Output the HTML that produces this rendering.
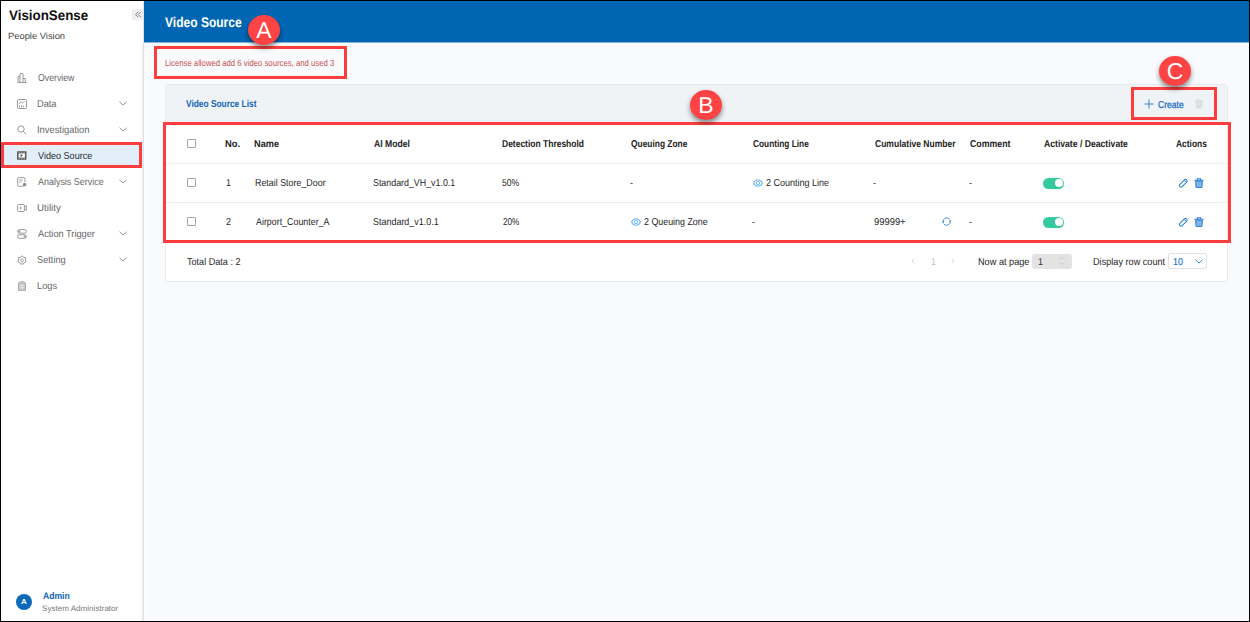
<!DOCTYPE html>
<html><head><meta charset="utf-8">
<style>
*{box-sizing:border-box;margin:0;padding:0}
html,body{width:1250px;height:622px;overflow:hidden;background:#f9fafd}
body{font-family:"Liberation Sans",sans-serif;position:relative}
.a{position:absolute}
.tx{position:absolute;white-space:nowrap;transform-origin:0 0;z-index:5;text-rendering:geometricPrecision}
#border{position:absolute;left:0;top:0;width:1250px;height:622px;border:1px solid #000;z-index:100}
#side{position:absolute;left:0;top:0;width:144px;height:622px;background:#fff;border-right:1px solid #e2e2e2}
#hdr{position:absolute;left:144px;top:0;width:1106px;height:43px;background:#0066b3;border-bottom:1px solid #80b3d9}
.ic{position:absolute;left:17px;z-index:5}
.ch{position:absolute;left:119px;z-index:5}
.rb{position:absolute;border:3px solid #fb3d3d;z-index:40}
.circ{position:absolute;width:32px;height:30px;border-radius:50%;background:#fd4343;color:#fff;font-size:23px;text-align:center;line-height:31px;text-rendering:geometricPrecision;box-shadow:0 3px 5px rgba(0,0,0,.45);z-index:50}
#card{position:absolute;left:165px;top:84px;width:1063px;height:198px;background:#fff;border:1px solid #e8e9eb;border-radius:3px}
#cardhdr{position:absolute;left:166px;top:85px;width:1061px;height:37px;background:#eff3f6;border-radius:2px 2px 0 0}
.cb{position:absolute;left:187px;width:9px;height:9px;border:1px solid #a4a4a4;border-radius:1px;background:#fff}
.hl{position:absolute;left:166px;width:1061px;height:1px;background:#ececec}
.tog{position:absolute;left:1043px;width:21px;height:11px;border-radius:6px;background:#34c99f}
.tog:after{content:"";position:absolute;right:1.5px;top:1.3px;width:8px;height:8px;border-radius:50%;background:#fff}
</style></head><body>
<div id="side"></div>
<div class="a" style="left:140px;top:43px;width:3px;height:579px;background:linear-gradient(to right,#ffffff,#f0f0f0)"></div>
<div class="a" style="left:144px;top:43px;width:3px;height:579px;background:linear-gradient(to right,#fdfdfe,#f9fafd)"></div>
<div id="hdr"></div>
<div id="card"></div>
<div id="cardhdr"></div>

<div class="a" style="left:132px;top:9px;width:11px;height:11px;background:#efefef"></div>
<svg class="a" style="left:132px;top:9px" width="11" height="11" viewBox="0 0 11 11"><path d="M6.2 2.8 L3.6 5.5 L6.2 8.2 M8.9 2.8 L6.3 5.5 L8.9 8.2" fill="none" stroke="#7a7a7a" stroke-width="0.95"/></svg>

<!-- Overview -->
<svg class="ic" style="top:73px" width="10" height="10" viewBox="0 0 10 10"><path d="M0.5 9.5 H9.5 M1 9.3 V3.7 H3 M3 9.3 V1 Q3 0.5 3.5 0.5 H5.6 Q6 0.5 6 1 V9.3 M6 5.5 H8.3 V9.3" fill="none" stroke="#8e8e8e" stroke-width="0.9"/></svg>
<!-- Data -->
<svg class="ic" style="top:99px" width="10" height="10" viewBox="0 0 10 10"><rect x="0.5" y="0.5" width="9" height="9" rx="1" fill="none" stroke="#8e8e8e" stroke-width="0.9"/><path d="M2 5 L4 3 L5.5 4 L7.8 2 M2.5 8.5 V6.5 M4.5 8.5 V6 M6.5 8.5 V6.5" fill="none" stroke="#8e8e8e" stroke-width="0.8"/></svg>
<svg class="ch" style="top:101px" width="8" height="5" viewBox="0 0 8 5"><path d="M0.5 0.8 L4 4 L7.5 0.8" fill="none" stroke="#8a8a8a" stroke-width="0.9"/></svg>
<!-- Investigation -->
<svg class="ic" style="top:125px" width="10" height="10" viewBox="0 0 10 10"><circle cx="4" cy="4" r="3.2" fill="none" stroke="#8e8e8e" stroke-width="0.9"/><path d="M6.3 6.3 L9.3 9.3" stroke="#8e8e8e" stroke-width="0.9"/></svg>
<svg class="ch" style="top:127px" width="8" height="5" viewBox="0 0 8 5"><path d="M0.5 0.8 L4 4 L7.5 0.8" fill="none" stroke="#8a8a8a" stroke-width="0.9"/></svg>
<!-- Video Source active -->
<div class="a" style="left:1px;top:142px;width:142px;height:26px;background:#e2eefa"></div>
<svg class="ic" style="top:151px" width="10" height="10" viewBox="0 0 10 10"><rect x="0" y="0" width="9.5" height="9" rx="1.3" fill="#5e5e5e"/><rect x="1.6" y="2.4" width="6.3" height="4.2" fill="#fff"/><path d="M3.6 3 L6 4.5 L3.6 6 Z" fill="#4a4a4a"/><path d="M1.5 1 H3 M4 1 H5.5 M6.5 1 H8 M1.5 8 H3 M4 8 H5.5 M6.5 8 H8" stroke="#fff" stroke-width="0.6"/></svg>
<!-- Analysis Service -->
<svg class="ic" style="top:177px" width="10" height="10" viewBox="0 0 10 10"><path d="M6.5 9.3 H1.3 Q0.7 9.3 0.7 8.7 V1.3 Q0.7 0.7 1.3 0.7 H7.3 Q7.9 0.7 7.9 1.3 V5" fill="none" stroke="#8e8e8e" stroke-width="0.9"/><path d="M2.3 3 H5.5 M2.3 5 H4.5" stroke="#8e8e8e" stroke-width="0.8"/><circle cx="7.6" cy="7.6" r="1.8" fill="#8e8e8e"/></svg>
<svg class="ch" style="top:179px" width="8" height="5" viewBox="0 0 8 5"><path d="M0.5 0.8 L4 4 L7.5 0.8" fill="none" stroke="#8a8a8a" stroke-width="0.9"/></svg>
<!-- Utility -->
<svg class="ic" style="top:203px" width="10" height="10" viewBox="0 0 10 10"><rect x="0.6" y="1.5" width="6.8" height="7" rx="0.8" fill="none" stroke="#8e8e8e" stroke-width="0.9"/><path d="M7.4 4 L9.4 2.8 V7.2 L7.4 6" fill="none" stroke="#8e8e8e" stroke-width="0.9"/><path d="M3 3.5 L5 5 L3 6.5 Z" fill="#8e8e8e"/></svg>
<!-- Action Trigger -->
<svg class="ic" style="top:229px" width="10" height="10" viewBox="0 0 10 10"><rect x="0.6" y="0.6" width="8.8" height="3.6" rx="1.8" fill="none" stroke="#8e8e8e" stroke-width="0.9"/><rect x="0.6" y="5.8" width="8.8" height="3.6" rx="1.8" fill="none" stroke="#8e8e8e" stroke-width="0.9"/><circle cx="2.4" cy="2.4" r="1" fill="#8e8e8e"/><circle cx="7.6" cy="7.6" r="1" fill="#8e8e8e"/></svg>
<svg class="ch" style="top:231px" width="8" height="5" viewBox="0 0 8 5"><path d="M0.5 0.8 L4 4 L7.5 0.8" fill="none" stroke="#8a8a8a" stroke-width="0.9"/></svg>
<!-- Setting -->
<svg class="ic" style="top:255px" width="10" height="10" viewBox="0 0 10 10"><path d="M5 0.7 L6.4 2.2 L8.6 2.6 L8.3 4.8 L9.2 6.6 L7.2 7.5 L6.2 9.3 L5 8.6 L3.8 9.3 L2.8 7.5 L0.8 6.6 L1.7 4.8 L1.4 2.6 L3.6 2.2 Z" fill="none" stroke="#8e8e8e" stroke-width="0.9" stroke-linejoin="round"/><circle cx="5" cy="5.3" r="1.4" fill="none" stroke="#8e8e8e" stroke-width="0.8"/></svg>
<svg class="ch" style="top:257px" width="8" height="5" viewBox="0 0 8 5"><path d="M0.5 0.8 L4 4 L7.5 0.8" fill="none" stroke="#8a8a8a" stroke-width="0.9"/></svg>
<!-- Logs -->
<svg class="ic" style="top:281px" width="10" height="10" viewBox="0 0 10 10"><path d="M1.5 2.2 Q1.5 1.6 2.1 1.6 H3.3 Q3.6 0.4 5 0.4 Q6.4 0.4 6.7 1.6 H7.9 Q8.5 1.6 8.5 2.2 V9 Q8.5 9.6 7.9 9.6 H2.1 Q1.5 9.6 1.5 9 Z" fill="#c9c9c9" stroke="#9c9c9c" stroke-width="0.8"/><path d="M3 4.6 H7 M3 6.8 H7" stroke="#f4f4f4" stroke-width="0.8"/></svg>

<div class="a" style="left:16px;top:594px;width:16px;height:16px;border-radius:50%;background:#0d6ab8;color:#fff;font-size:8px;font-weight:bold;text-align:center;line-height:16px">A</div>

<svg class="a" style="left:1144px;top:99px" width="10" height="10" viewBox="0 0 10 10"><path d="M5 0.5 V9.5 M0.5 5 H9.5" stroke="#3a86cc" stroke-width="1"/></svg>
<svg class="a" style="left:1194px;top:99px" width="10" height="10" viewBox="0 0 10 10"><path d="M0.5 2 H9.5 M3.5 2 V0.8 H6.5 V2" fill="none" stroke="#d8d8d8" stroke-width="1"/><path d="M1.5 2.5 H8.5 L8 9.5 H2 Z" fill="#dedede"/></svg>

<div class="hl" style="top:163px"></div>
<div class="hl" style="top:202px"></div>
<div class="cb" style="top:139px"></div>
<div class="cb" style="top:178px"></div>
<div class="cb" style="top:217px"></div>

<svg class="a" style="left:753px;top:179px" width="10" height="8" viewBox="0 0 10 8"><path d="M0.6 4 C2.3 -0.3 7.7 -0.3 9.4 4 C7.7 8.3 2.3 8.3 0.6 4 Z" fill="none" stroke="#70bcf6" stroke-width="1.1"/><circle cx="5" cy="4" r="1.7" fill="none" stroke="#70bcf6" stroke-width="1"/></svg>
<div class="tog" style="top:177.6px"></div>
<svg class="a" style="left:631px;top:218px" width="10" height="8" viewBox="0 0 10 8"><path d="M0.6 4 C2.3 -0.3 7.7 -0.3 9.4 4 C7.7 8.3 2.3 8.3 0.6 4 Z" fill="none" stroke="#70bcf6" stroke-width="1.1"/><circle cx="5" cy="4" r="1.7" fill="none" stroke="#70bcf6" stroke-width="1"/></svg>
<svg class="a" style="left:942px;top:217px" width="10" height="10" viewBox="0 0 10 10"><path d="M1.2 5.6 A3.7 3.7 0 0 1 7.6 2.2 M8.2 3.6 A3.7 3.7 0 0 1 1.8 7" fill="none" stroke="#3a8ad6" stroke-width="0.95"/><path d="M0.2 4.6 L2.4 4.6 L1.2 6.4 Z M9.2 4.6 L7 4.6 L8.2 2.8 Z" fill="#3a8ad6"/></svg>
<div class="tog" style="top:216.6px"></div>

<svg class="a" style="left:1177.5px;top:177.5px" width="11" height="11" viewBox="0 0 11 11"><g transform="rotate(-45 5.3 5.3)"><rect x="0.5" y="3.7" width="9.6" height="3.2" rx="1.6" fill="none" stroke="#3282d2" stroke-width="1.05"/><path d="M8 3.7 V6.9" stroke="#3282d2" stroke-width="0.9"/></g></svg>
<svg class="a" style="left:1194px;top:178px" width="10" height="10" viewBox="0 0 10 10"><path d="M0.3 2.2 H9.7 M3.3 2 V0.7 H6.7 V2" fill="none" stroke="#3282d2" stroke-width="1.1"/><path d="M1.6 3 H8.4 L8 9.5 H2 Z" fill="#6aa8e4" stroke="#3282d2" stroke-width="0.9"/><path d="M3.9 3.8 V8.6 M6.1 3.8 V8.6" stroke="#a8d0f5" stroke-width="0.7"/></svg>
<svg class="a" style="left:1177.5px;top:216.5px" width="11" height="11" viewBox="0 0 11 11"><g transform="rotate(-45 5.3 5.3)"><rect x="0.5" y="3.7" width="9.6" height="3.2" rx="1.6" fill="none" stroke="#3282d2" stroke-width="1.05"/><path d="M8 3.7 V6.9" stroke="#3282d2" stroke-width="0.9"/></g></svg>
<svg class="a" style="left:1194px;top:217px" width="10" height="10" viewBox="0 0 10 10"><path d="M0.3 2.2 H9.7 M3.3 2 V0.7 H6.7 V2" fill="none" stroke="#3282d2" stroke-width="1.1"/><path d="M1.6 3 H8.4 L8 9.5 H2 Z" fill="#6aa8e4" stroke="#3282d2" stroke-width="0.9"/><path d="M3.9 3.8 V8.6 M6.1 3.8 V8.6" stroke="#a8d0f5" stroke-width="0.7"/></svg>

<svg class="a" style="left:911px;top:258px" width="4" height="6" viewBox="0 0 4 6"><path d="M3 0.6 L1 3 L3 5.4" fill="none" stroke="#cccccc" stroke-width="0.8"/></svg>
<svg class="a" style="left:951px;top:258px" width="4" height="6" viewBox="0 0 4 6"><path d="M1 0.6 L3 3 L1 5.4" fill="none" stroke="#cccccc" stroke-width="0.8"/></svg>
<div class="a" style="left:1032px;top:253.5px;width:40px;height:15px;background:#e3e3e3;border-radius:3px"></div>
<svg class="a" style="left:1059px;top:256px" width="6" height="10" viewBox="0 0 6 10"><path d="M0.6 3.6 L3 1.2 L5.4 3.6 M0.6 6.2 L3 8.6 L5.4 6.2" fill="none" stroke="#c4c4c4" stroke-width="0.8"/></svg>
<div class="a" style="left:1168px;top:253px;width:39px;height:16px;background:#fff;border:1px solid #e2e2e2;border-radius:2px"></div>
<svg class="a" style="left:1195px;top:259px" width="8" height="5" viewBox="0 0 8 5"><path d="M0.6 0.8 L4 4 L7.4 0.8" fill="none" stroke="#3a86cc" stroke-width="1"/></svg>

<div class="tx" style="left:8.80px;top:8px;font-size:14px;line-height:14px;font-weight:700;color:#111;transform:scaleX(0.9542);">VisionSense</div>
<div class="tx" style="left:8.46px;top:32px;font-size:9px;line-height:9px;font-weight:400;color:#444;transform:scaleX(1.0396);">People Vision</div>
<div class="tx" style="left:37.50px;top:74px;font-size:10px;line-height:10px;font-weight:400;color:#666666;transform:scaleX(0.8738);">Overview</div>
<div class="tx" style="left:36.58px;top:100px;font-size:10px;line-height:10px;font-weight:400;color:#666666;transform:scaleX(0.9200);">Data</div>
<div class="tx" style="left:36.57px;top:126px;font-size:10px;line-height:10px;font-weight:400;color:#666666;transform:scaleX(0.9345);">Investigation</div>
<div class="tx" style="left:37.50px;top:152px;font-size:10px;line-height:10px;font-weight:400;color:#2a2a2a;transform:scaleX(0.9068);">Video Source</div>
<div class="tx" style="left:37.50px;top:178px;font-size:10px;line-height:10px;font-weight:400;color:#666666;transform:scaleX(0.8945);">Analysis Service</div>
<div class="tx" style="left:36.53px;top:204px;font-size:10px;line-height:10px;font-weight:400;color:#666666;transform:scaleX(0.9739);">Utility</div>
<div class="tx" style="left:37.50px;top:230px;font-size:10px;line-height:10px;font-weight:400;color:#666666;transform:scaleX(0.9230);">Action Trigger</div>
<div class="tx" style="left:36.58px;top:256px;font-size:10px;line-height:10px;font-weight:400;color:#666666;transform:scaleX(0.9233);">Setting</div>
<div class="tx" style="left:36.58px;top:282px;font-size:10px;line-height:10px;font-weight:400;color:#666666;transform:scaleX(0.9238);">Logs</div>
<div class="tx" style="left:42.90px;top:592px;font-size:9.5px;line-height:9.5px;font-weight:700;color:#0d64b0;transform:scaleX(0.9034);">Admin</div>
<div class="tx" style="left:41.89px;top:605px;font-size:8px;line-height:8px;font-weight:400;color:#7a7a7a;transform:scaleX(1.0095);">System Administrator</div>
<div class="tx" style="left:165.20px;top:15px;font-size:14px;line-height:14px;font-weight:700;color:#fff;transform:scaleX(0.8596);">Video Source</div>
<div class="tx" style="left:165.24px;top:59px;font-size:9px;line-height:9px;font-weight:400;color:#c8534f;transform:scaleX(0.8605);">License allowed add 6 video sources, and used 3</div>
<div class="tx" style="left:185.90px;top:100px;font-size:10px;line-height:10px;font-weight:700;color:#1565b8;transform:scaleX(0.8357);">Video Source List</div>
<div class="tx" style="left:1157.60px;top:101px;font-size:10px;line-height:10px;font-weight:400;color:#1a6cbb;transform:scaleX(0.8567);-webkit-text-stroke:0.25px #1a6cbb">Create</div>
<div class="tx" style="left:224.77px;top:140px;font-size:10px;line-height:10px;font-weight:700;color:#222;transform:scaleX(0.9333);">No.</div>
<div class="tx" style="left:254.48px;top:140px;font-size:10px;line-height:10px;font-weight:700;color:#222;transform:scaleX(0.9231);">Name</div>
<div class="tx" style="left:374.20px;top:140px;font-size:10px;line-height:10px;font-weight:700;color:#222;transform:scaleX(0.8634);">AI Model</div>
<div class="tx" style="left:502.15px;top:140px;font-size:10px;line-height:10px;font-weight:700;color:#222;transform:scaleX(0.8484);">Detection Threshold</div>
<div class="tx" style="left:631.10px;top:140px;font-size:10px;line-height:10px;font-weight:700;color:#222;transform:scaleX(0.8388);">Queuing Zone</div>
<div class="tx" style="left:753.10px;top:140px;font-size:10px;line-height:10px;font-weight:700;color:#222;transform:scaleX(0.8299);">Counting Line</div>
<div class="tx" style="left:874.60px;top:140px;font-size:10px;line-height:10px;font-weight:700;color:#222;transform:scaleX(0.8532);">Cumulative Number</div>
<div class="tx" style="left:970.00px;top:140px;font-size:10px;line-height:10px;font-weight:700;color:#222;transform:scaleX(0.8761);">Comment</div>
<div class="tx" style="left:1044.10px;top:140px;font-size:10px;line-height:10px;font-weight:700;color:#222;transform:scaleX(0.8619);">Activate / Deactivate</div>
<div class="tx" style="left:1176.10px;top:140px;font-size:10px;line-height:10px;font-weight:700;color:#222;transform:scaleX(0.8417);">Actions</div>
<div class="tx" style="left:225.71px;top:179px;font-size:10px;line-height:10px;font-weight:400;color:#262626;transform:scaleX(0.8900);">1</div>
<div class="tx" style="left:254.61px;top:179px;font-size:10px;line-height:10px;font-weight:400;color:#262626;transform:scaleX(0.8885);">Retail Store_Door</div>
<div class="tx" style="left:373.31px;top:179px;font-size:10px;line-height:10px;font-weight:400;color:#262626;transform:scaleX(0.8857);">Standard_VH_v1.0.1</div>
<div class="tx" style="left:502.04px;top:179px;font-size:10px;line-height:10px;font-weight:400;color:#262626;transform:scaleX(0.8579);">50%</div>
<div class="tx" style="left:630.31px;top:179px;font-size:10px;line-height:10px;font-weight:400;color:#262626;transform:scaleX(0.8900);">-</div>
<div class="tx" style="left:766.20px;top:179px;font-size:10px;line-height:10px;font-weight:400;color:#262626;transform:scaleX(0.9000);">2 Counting Line</div>
<div class="tx" style="left:873.41px;top:179px;font-size:10px;line-height:10px;font-weight:400;color:#262626;transform:scaleX(0.8900);">-</div>
<div class="tx" style="left:969.41px;top:179px;font-size:10px;line-height:10px;font-weight:400;color:#262626;transform:scaleX(0.8900);">-</div>
<div class="tx" style="left:225.60px;top:218px;font-size:10px;line-height:10px;font-weight:400;color:#262626;transform:scaleX(0.8900);">2</div>
<div class="tx" style="left:255.50px;top:218px;font-size:10px;line-height:10px;font-weight:400;color:#262626;transform:scaleX(0.8867);">Airport_Counter_A</div>
<div class="tx" style="left:373.30px;top:218px;font-size:10px;line-height:10px;font-weight:400;color:#262626;transform:scaleX(0.8958);">Standard_v1.0.1</div>
<div class="tx" style="left:502.90px;top:218px;font-size:10px;line-height:10px;font-weight:400;color:#262626;transform:scaleX(0.8150);">20%</div>
<div class="tx" style="left:644.30px;top:218px;font-size:10px;line-height:10px;font-weight:400;color:#262626;transform:scaleX(0.8873);">2 Queuing Zone</div>
<div class="tx" style="left:752.41px;top:218px;font-size:10px;line-height:10px;font-weight:400;color:#262626;transform:scaleX(0.8900);">-</div>
<div class="tx" style="left:874.30px;top:218px;font-size:10px;line-height:10px;font-weight:400;color:#262626;transform:scaleX(0.9394);">99999+</div>
<div class="tx" style="left:969.41px;top:218px;font-size:10px;line-height:10px;font-weight:400;color:#262626;transform:scaleX(0.8900);">-</div>
<div class="tx" style="left:186.70px;top:258px;font-size:10px;line-height:10px;font-weight:400;color:#262626;transform:scaleX(0.9086);">Total Data : 2</div>
<div class="tx" style="left:931.41px;top:258px;font-size:10px;line-height:10px;font-weight:400;color:#c4c4c4;transform:scaleX(0.8900);">1</div>
<div class="tx" style="left:978.18px;top:258px;font-size:10px;line-height:10px;font-weight:400;color:#262626;transform:scaleX(0.9164);">Now at page</div>
<div class="tx" style="left:1038.41px;top:258px;font-size:10px;line-height:10px;font-weight:400;color:#333;transform:scaleX(0.8900);">1</div>
<div class="tx" style="left:1092.79px;top:258px;font-size:10px;line-height:10px;font-weight:400;color:#262626;transform:scaleX(0.9141);">Display row count</div>
<div class="tx" style="left:1173.41px;top:258px;font-size:10px;line-height:10px;font-weight:400;color:#2a76c6;transform:scaleX(0.8900);-webkit-text-stroke:0.2px #2a76c6">10</div>

<div class="rb" style="left:1px;top:142px;width:141px;height:26px"></div>
<div class="rb" style="left:154px;top:46px;width:193px;height:33px"></div>
<div class="rb" style="left:1131px;top:87px;width:86px;height:33px"></div>
<div class="rb" style="left:163px;top:122px;width:1068px;height:121px"></div>

<div class="circ" style="left:248px;top:15px">A</div>
<div class="circ" style="left:690px;top:90px">B</div>
<div class="circ" style="left:1159px;top:56px">C</div>

<div id="border"></div>
</body></html>
